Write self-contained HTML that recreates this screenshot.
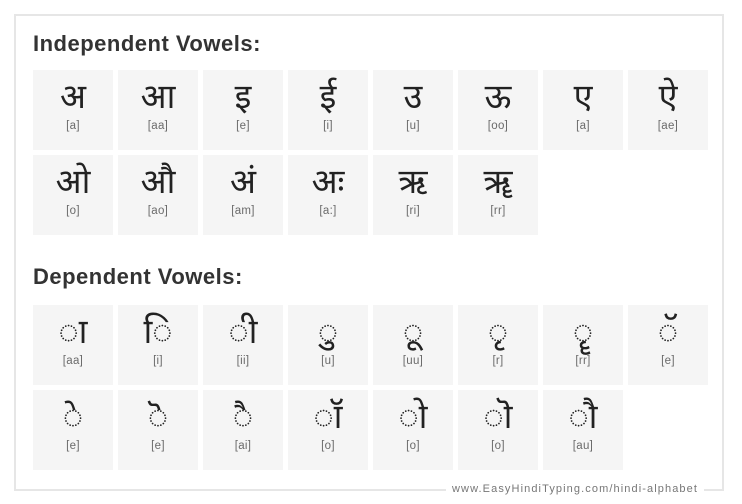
<!DOCTYPE html>
<html><head><meta charset="utf-8"><style>
html,body{margin:0;padding:0;background:#fff;}
body{width:742px;height:504px;position:relative;overflow:hidden;font-family:"Liberation Sans",sans-serif;}
.box{position:absolute;left:14px;top:14px;width:706px;height:473px;border:2px solid #e6e6e6;}
h2{position:absolute;left:33px;margin:0;font-size:22px;font-weight:bold;color:#333;letter-spacing:0.5px;}
.grid{position:absolute;left:33px;width:680px;}
.c{position:absolute;width:80px;height:80px;background:#f5f5f5;text-align:center;}
.c .h{position:absolute;left:0;right:0;top:7px;font-size:34px;line-height:40px;color:#222;font-family:"Liberation Sans","Noto Sans CJK SC",sans-serif;}
.c .t{position:absolute;left:0;right:0;top:50px;font-size:11.5px;color:#6a6a6a;letter-spacing:0.3px;}
.foot{position:absolute;left:446px;top:483px;padding:0 6px;background:#fff;font-size:11px;color:#777;letter-spacing:1.1px;}
</style></head><body>
<div class="box"></div>
<h2 style="top:31px">Independent Vowels:</h2>
<h2 style="top:264px">Dependent Vowels:</h2>
<div class="grid" style="top:70px">
<div class="c" style="left:0;top:0"><div class="h">अ</div><div class="t">[a]</div></div>
<div class="c" style="left:85px;top:0"><div class="h">आ</div><div class="t">[aa]</div></div>
<div class="c" style="left:170px;top:0"><div class="h">इ</div><div class="t">[e]</div></div>
<div class="c" style="left:255px;top:0"><div class="h">ई</div><div class="t">[i]</div></div>
<div class="c" style="left:340px;top:0"><div class="h">उ</div><div class="t">[u]</div></div>
<div class="c" style="left:425px;top:0"><div class="h">ऊ</div><div class="t">[oo]</div></div>
<div class="c" style="left:510px;top:0"><div class="h">ए</div><div class="t">[a]</div></div>
<div class="c" style="left:595px;top:0"><div class="h">ऐ</div><div class="t">[ae]</div></div>
<div class="c" style="left:0;top:85px"><div class="h">ओ</div><div class="t">[o]</div></div>
<div class="c" style="left:85px;top:85px"><div class="h">औ</div><div class="t">[ao]</div></div>
<div class="c" style="left:170px;top:85px"><div class="h">अं</div><div class="t">[am]</div></div>
<div class="c" style="left:255px;top:85px"><div class="h">अः</div><div class="t">[a:]</div></div>
<div class="c" style="left:340px;top:85px"><div class="h">ऋ</div><div class="t">[ri]</div></div>
<div class="c" style="left:425px;top:85px"><div class="h">ॠ</div><div class="t">[rr]</div></div>
</div>
<div class="grid" style="top:305px">
<div class="c" style="left:0;top:0"><div class="h">◌ा</div><div class="t">[aa]</div></div>
<div class="c" style="left:85px;top:0"><div class="h">◌ि</div><div class="t">[i]</div></div>
<div class="c" style="left:170px;top:0"><div class="h">◌ी</div><div class="t">[ii]</div></div>
<div class="c" style="left:255px;top:0"><div class="h">◌ु</div><div class="t">[u]</div></div>
<div class="c" style="left:340px;top:0"><div class="h">◌ू</div><div class="t">[uu]</div></div>
<div class="c" style="left:425px;top:0"><div class="h">◌ृ</div><div class="t">[r]</div></div>
<div class="c" style="left:510px;top:0"><div class="h">◌ॄ</div><div class="t">[rr]</div></div>
<div class="c" style="left:595px;top:0"><div class="h">◌ॅ</div><div class="t">[e]</div></div>
<div class="c" style="left:0;top:85px"><div class="h">◌े</div><div class="t">[e]</div></div>
<div class="c" style="left:85px;top:85px"><div class="h">◌ॆ</div><div class="t">[e]</div></div>
<div class="c" style="left:170px;top:85px"><div class="h">◌ै</div><div class="t">[ai]</div></div>
<div class="c" style="left:255px;top:85px"><div class="h">◌ॉ</div><div class="t">[o]</div></div>
<div class="c" style="left:340px;top:85px"><div class="h">◌ो</div><div class="t">[o]</div></div>
<div class="c" style="left:425px;top:85px"><div class="h">◌ॊ</div><div class="t">[o]</div></div>
<div class="c" style="left:510px;top:85px"><div class="h">◌ौ</div><div class="t">[au]</div></div>
</div>
<div class="foot">www.EasyHindiTyping.com/hindi-alphabet</div>
</body></html>
